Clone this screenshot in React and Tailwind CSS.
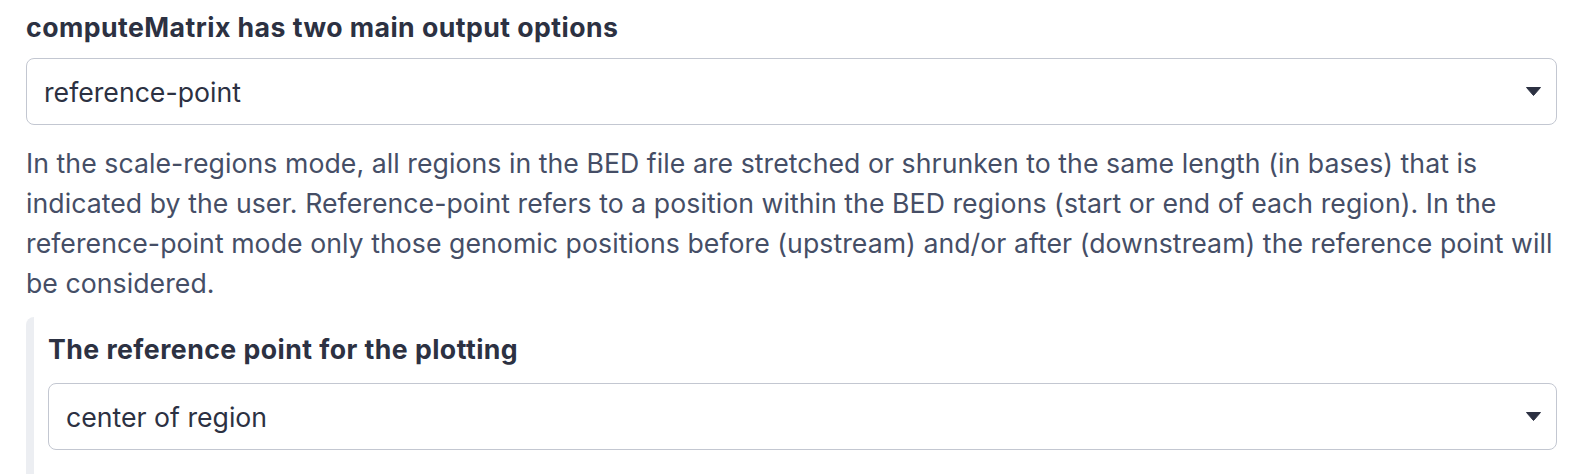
function Caret() {
    return (
        <svg width="15" height="9" viewBox="0 0 15 9" className="shrink-0">
            <path d="M0.5 0.5 H14.5 L7.5 8.5 Z" fill="#2c3142" stroke="#2c3142" strokeLinejoin="round" />
        </svg>
    );
}

function SelectBox({ value }) {
    return (
        <div className="h-[67px] rounded-[8px] border border-[#c3c7d1] bg-white flex items-center justify-between pl-[17px] pr-[15px]">
            <span className="text-[26.67px] text-[#2c3142]">{value}</span>
            <Caret />
        </div>
    );
}

export default function App() {
    return (
        <div className="w-[1596px] h-[474px] overflow-hidden bg-white pl-[26px] pr-[39px] pt-[7px] font-['Inter',sans-serif]">
            <h3 className="text-[26.67px] leading-[40px] font-bold tracking-[0.45px] text-[#2c3142]">computeMatrix has two main output options</h3>
            <div className="mt-[11px]">
                <SelectBox value="reference-point" />
            </div>
            <p className="mt-[18px] text-[26.67px] leading-[40px] tracking-[0.05px] text-[#454e66]">
                In the scale-regions mode, all regions in the BED file are stretched or shrunken to the same length (in bases) that is<br />
                indicated by the user. Reference-point refers to a position within the BED regions (start or end of each region). In the<br />
                reference-point mode only those genomic positions before (upstream) and/or after (downstream) the reference point will<br />
                be considered.
            </p>
            <div className="mt-[14px] h-[200px] border-l-[8px] border-[#eceef2] rounded-tl-[8px] pl-[14px] pt-[12px]">
                <h3 className="text-[26.67px] leading-[40px] font-bold tracking-[0.45px] text-[#2c3142]">The reference point for the plotting</h3>
                <div className="mt-[14px]">
                    <SelectBox value="center of region" />
                </div>
            </div>
        </div>
    );
}
